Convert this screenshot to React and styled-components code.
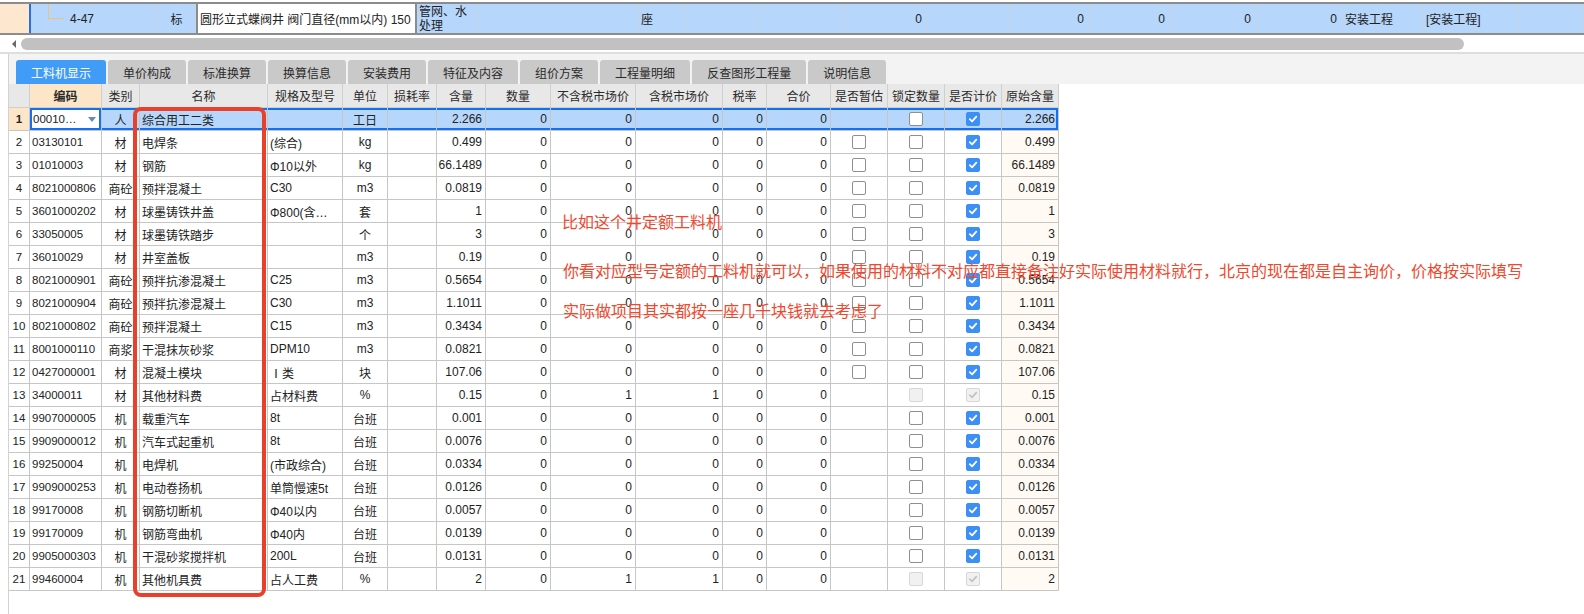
import React from "react";
import styled, { createGlobalStyle, css } from "styled-components";

const Global = createGlobalStyle`
  html, body { margin: 0; padding: 0; background: #fff; }
  body {
    font-family: "Liberation Sans", "Noto Sans CJK SC", sans-serif;
    font-size: 12px;
    color: #222;
  }
`;

const Page = styled.div`
  position: relative;
  width: 1584px;
  height: 614px;
  overflow: hidden;
  background: #fff;
`;

/* ---------- top (parent grid) row ---------- */
const TopArea = styled.div`
  padding-top: 2px;
  background: #fff;
`;

const TopRow = styled.div`
  display: flex;
  height: 33px;
  box-sizing: border-box;
  border-top: 2px solid #8c8c8c;
  border-bottom: 2px solid #8c8c8c;
  background: #b6d6fb;
`;

const TopHead = styled.div`
  width: 29px;
  flex: none;
  background: #fde8cf;
  border-right: 2px solid #2b6fd6;
`;

const TopCell = styled.div`
  width: ${(p) => p.$w}px;
  flex: ${(p) => (p.$grow ? "1" : "none")};
  box-sizing: border-box;
  border-right: 1px solid #c5d3e3;
  display: flex;
  align-items: center;
  justify-content: ${(p) =>
    p.$align === "right" ? "flex-end" : p.$align === "center" ? "center" : "flex-start"};
  padding: ${(p) => (p.$align === "right" ? "0 5px 0 0" : "0 0 0 2px")};
  font-size: 12px;
  white-space: nowrap;
  position: relative;
  ${(p) =>
    p.$white &&
    css`
      background: #fff;
      border-left: 2px solid #8c8c8c;
      border-right: 2px solid #8c8c8c;
    `}
`;

const TwoLine = styled.div`
  white-space: normal;
  line-height: 14px;
  align-self: flex-start;
  padding-top: 1px;
  width: 52px;
`;

const TreeLine = styled.span`
  width: 16px;
  height: 15px;
  margin: -14px 6px 0 15px;
  box-sizing: border-box;
  border-left: 1px solid #efc27c;
  border-bottom: 1px solid #efc27c;
  flex: none;
`;

/* ---------- horizontal scrollbar ---------- */
const ScrollArea = styled.div`
  height: 19px;
  box-sizing: border-box;
  display: flex;
  align-items: center;
  gap: 5px;
  padding-left: 12px;
  border-bottom: 2px solid #dedede;
`;

const ArrowLeft = styled.span`
  width: 0;
  height: 0;
  border-top: 4px solid transparent;
  border-bottom: 4px solid transparent;
  border-right: 4px solid #6a6a6a;
`;

const Thumb = styled.div`
  width: 1443px;
  height: 12px;
  border-radius: 6px;
  background: #c1c1c1;
`;

/* ---------- bottom panel ---------- */
const Panel = styled.div`
  margin-left: 8px;
  border-left: 1px solid #d2d2d2;
  height: 560px;
`;

const TabStrip = styled.div`
  display: flex;
  align-items: flex-end;
  gap: 2px;
  height: 30px;
  box-sizing: border-box;
  padding-left: 7px;
  background: #f3f3f3;
`;

const Tab = styled.div`
  height: 24px;
  padding: 0 15px;
  display: flex;
  align-items: center;
  font-family: "Noto Sans CJK SC", sans-serif;
  font-size: 12px;
  border-radius: 3px 3px 0 0;
  background: ${(p) => (p.$active ? "#409cf7" : "#c9c9c9")};
  color: ${(p) => (p.$active ? "#fff" : "#2a2a2a")};
`;

const COLS = [21, 72, 38, 128, 75, 45, 49, 49, 65, 85, 87, 44, 64, 57, 57, 57, 57];

const GridRow = styled.div`
  display: grid;
  grid-template-columns: ${COLS.map((c) => c + "px").join(" ")};
  height: ${(p) => (p.$head ? 24 : 23)}px;
`;

const Cell = styled.div`
  box-sizing: border-box;
  border-right: 1px solid #c6c6c6;
  border-bottom: 1px solid #c6c6c6;
  display: flex;
  align-items: center;
  justify-content: ${(p) =>
    p.$align === "right" ? "flex-end" : p.$align === "center" ? "center" : "flex-start"};
  padding: ${(p) => (p.$align === "right" ? "0 3px 0 0" : p.$align === "center" ? "0" : "0 0 0 2px")};
  background: ${(p) => p.$bg || "#fff"};
  font-size: ${(p) => (p.$small ? "11.5px" : "12px")};
  font-weight: ${(p) => (p.$bold ? "bold" : "normal")};
  white-space: nowrap;
  overflow: hidden;
  ${(p) =>
    p.$sel &&
    css`
      box-shadow: inset 0 2px 0 #1570ef, inset 0 -2px 0 #1570ef;
    `}
  ${(p) =>
    p.$selLast &&
    css`
      box-shadow: inset 0 2px 0 #1570ef, inset 0 -2px 0 #1570ef, inset -2px 0 0 #1570ef;
    `}
  ${(p) =>
    p.$focus &&
    css`
      box-shadow: inset 0 0 0 2px #1570ef;
      justify-content: space-between;
      padding: 0 5px 0 3px;
    `}
`;

const HeadCell = styled.div`
  box-sizing: border-box;
  border-right: 1px solid #cfcfcf;
  border-bottom: 1px solid #cfcfcf;
  display: flex;
  align-items: center;
  justify-content: center;
  background: ${(p) => (p.$hl ? "#fde6c8" : "#e8e8e8")};
  font-family: "Noto Sans CJK SC", sans-serif;
  font-weight: ${(p) => (p.$hl ? "bold" : "normal")};
  font-size: 12px;
  color: #2a2a2a;
  white-space: nowrap;
`;

const DropTri = styled.span`
  width: 0;
  height: 0;
  border-left: 4px solid transparent;
  border-right: 4px solid transparent;
  border-top: 5px solid #5f8cc4;
`;

const Box = styled.span`
  width: 14px;
  height: 14px;
  box-sizing: border-box;
  border-radius: 2px;
  display: flex;
  align-items: center;
  justify-content: center;
  border: 1px solid
    ${(p) =>
      p.$s === "c" ? "#3c8ff4" : p.$s === "d" || p.$s === "dc" ? "#d7d7d7" : "#8f8f8f"};
  background: ${(p) =>
    p.$s === "c" ? "#3c8ff4" : p.$s === "d" || p.$s === "dc" ? "#f1f1f1" : "#fff"};
`;

const Annot = styled.div`
  position: absolute;
  left: ${(p) => p.$x}px;
  top: ${(p) => p.$y}px;
  font-family: "Noto Sans CJK SC", sans-serif;
  font-size: 16px;
  line-height: 20px;
  color: #f0472d;
  white-space: nowrap;
`;

const RedFrame = styled.div`
  position: absolute;
  left: 133px;
  top: 107px;
  width: 133px;
  height: 490px;
  box-sizing: border-box;
  border: 4px solid #e8402a;
  border-radius: 8px;
`;

function CheckBox({ s }) {
  if (!s) return null;
  return (
    <Box $s={s}>
      {(s === "c" || s === "dc") && (
        <svg width="10" height="10" viewBox="0 0 10 10">
          <path
            d="M1.8 5.2 L4.1 7.4 L8.3 2.6"
            fill="none"
            stroke={s === "c" ? "#fff" : "#c4c4c4"}
            strokeWidth="1.8"
            strokeLinecap="round"
            strokeLinejoin="round"
          />
        </svg>
      )}
    </Box>
  );
}

const HEAD = [
  "",
  "编码",
  "类别",
  "名称",
  "规格及型号",
  "单位",
  "损耗率",
  "含量",
  "数量",
  "不含税市场价",
  "含税市场价",
  "税率",
  "合价",
  "是否暂估",
  "锁定数量",
  "是否计价",
  "原始含量",
];

const ROWS = [
  ["00010…", "人", "综合用工二类", "", "工日", "2.266", "0", "0", "0", null, "u", "c"],
  ["03130101", "材", "电焊条", "(综合)", "kg", "0.499", "0", "0", "0", "u", "u", "c"],
  ["01010003", "材", "钢筋", "Φ10以外", "kg", "66.1489", "0", "0", "0", "u", "u", "c"],
  ["8021000806", "商砼", "预拌混凝土", "C30", "m3", "0.0819", "0", "0", "0", "u", "u", "c"],
  ["3601000202", "材", "球墨铸铁井盖", "Φ800(含…", "套", "1", "0", "0", "0", "u", "u", "c"],
  ["33050005", "材", "球墨铸铁踏步", "", "个", "3", "0", "0", "0", "u", "u", "c"],
  ["36010029", "材", "井室盖板", "", "m3", "0.19", "0", "0", "0", "u", "u", "c"],
  ["8021000901", "商砼", "预拌抗渗混凝土", "C25", "m3", "0.5654", "0", "0", "0", "u", "u", "c"],
  ["8021000904", "商砼", "预拌抗渗混凝土", "C30", "m3", "1.1011", "0", "0", "0", "u", "u", "c"],
  ["8021000802", "商砼", "预拌混凝土", "C15", "m3", "0.3434", "0", "0", "0", "u", "u", "c"],
  ["8001000110", "商浆", "干混抹灰砂浆", "DPM10", "m3", "0.0821", "0", "0", "0", "u", "u", "c"],
  ["0427000001", "材", "混凝土模块", "Ⅰ类", "块", "107.06", "0", "0", "0", "u", "u", "c"],
  ["34000011", "材", "其他材料费", "占材料费", "%", "0.15", "0", "1", "1", null, "d", "dc"],
  ["9907000005", "机", "载重汽车", "8t", "台班", "0.001", "0", "0", "0", null, "u", "c"],
  ["9909000012", "机", "汽车式起重机", "8t", "台班", "0.0076", "0", "0", "0", null, "u", "c"],
  ["99250004", "机", "电焊机", "(市政综合)", "台班", "0.0334", "0", "0", "0", null, "u", "c"],
  ["9909000253", "机", "电动卷扬机", "单筒慢速5t", "台班", "0.0126", "0", "0", "0", null, "u", "c"],
  ["99170008", "机", "钢筋切断机", "Φ40以内", "台班", "0.0057", "0", "0", "0", null, "u", "c"],
  ["99170009", "机", "钢筋弯曲机", "Φ40内", "台班", "0.0139", "0", "0", "0", null, "u", "c"],
  ["9905000303", "机", "干混砂浆搅拌机", "200L", "台班", "0.0131", "0", "0", "0", null, "u", "c"],
  ["99460004", "机", "其他机具费", "占人工费", "%", "2", "0", "1", "1", null, "d", "dc"],
];

const TABS = [
  "工料机显示",
  "单价构成",
  "标准换算",
  "换算信息",
  "安装费用",
  "特征及内容",
  "组价方案",
  "工程量明细",
  "反查图形工程量",
  "说明信息",
];

function DataRow({ r, i }) {
  const sel = i === 0;
  const [code, kind, name, spec, unit, qty, num, p1, p2, est, lock, price] = r;
  const bg = sel ? "#b6d6fb" : "#fff";
  return (
    <GridRow>
      <Cell $align="center" $bg={sel ? "#fde6c8" : "#fff"} $bold={sel} $small>
        {i + 1}
      </Cell>
      {sel ? (
        <Cell $focus $small>
          <span>{code}</span>
          <DropTri />
        </Cell>
      ) : (
        <Cell $small>{code}</Cell>
      )}
      <Cell $align="center" $bg={bg} $sel={sel}>{kind}</Cell>
      <Cell $bg={bg} $sel={sel}>{name}</Cell>
      <Cell $bg={bg} $sel={sel}>{spec}</Cell>
      <Cell $align="center" $bg={bg} $sel={sel}>{unit}</Cell>
      <Cell $bg={bg} $sel={sel} />
      <Cell $align="right" $bg={bg} $sel={sel}>{qty}</Cell>
      <Cell $align="right" $bg={bg} $sel={sel}>{num}</Cell>
      <Cell $align="right" $bg={bg} $sel={sel}>{p1}</Cell>
      <Cell $align="right" $bg={bg} $sel={sel}>{p2}</Cell>
      <Cell $align="right" $bg={bg} $sel={sel}>0</Cell>
      <Cell $align="right" $bg={bg} $sel={sel}>0</Cell>
      <Cell $align="center" $bg={bg} $sel={sel}><CheckBox s={est} /></Cell>
      <Cell $align="center" $bg={bg} $sel={sel}><CheckBox s={lock} /></Cell>
      <Cell $align="center" $bg={bg} $sel={sel}><CheckBox s={price} /></Cell>
      <Cell $align="right" $bg={sel ? bg : "#fffaf4"} $selLast={sel}>{qty}</Cell>
    </GridRow>
  );
}

export default function App() {
  return (
    <Page>
      <Global />
      <TopArea>
        <TopRow>
          <TopHead />
          <TopCell $w={125}>
            <TreeLine />
            4-47
          </TopCell>
          <TopCell $w={40} $align="center">标</TopCell>
          <TopCell $w={221} $white>圆形立式蝶阀井 阀门直径(mm以内) 150</TopCell>
          <TopCell $w={61}>
            <TwoLine>管网、水处理</TwoLine>
          </TopCell>
          <TopCell $w={161} />
          <TopCell $w={46}>座</TopCell>
          <TopCell $w={72} />
          <TopCell $w={86} />
          <TopCell $w={85} $align="right">0</TopCell>
          <TopCell $w={82} />
          <TopCell $w={80} $align="right">0</TopCell>
          <TopCell $w={81} $align="right">0</TopCell>
          <TopCell $w={86} $align="right">0</TopCell>
          <TopCell $w={86} $align="right">0</TopCell>
          <TopCell $w={81}>安装工程</TopCell>
          <TopCell $w={96}>[安装工程]</TopCell>
          <TopCell $grow />
        </TopRow>
      </TopArea>
      <ScrollArea>
        <ArrowLeft />
        <Thumb />
      </ScrollArea>
      <Panel>
        <TabStrip>
          {TABS.map((t, i) => (
            <Tab key={t} $active={i === 0}>{t}</Tab>
          ))}
        </TabStrip>
        <GridRow $head>
          {HEAD.map((h, i) => (
            <HeadCell key={i} $hl={i === 1}>{h}</HeadCell>
          ))}
        </GridRow>
        {ROWS.map((r, i) => (
          <DataRow key={i} r={r} i={i} />
        ))}
      </Panel>
      <RedFrame />
      <Annot $x={562} $y={211}>比如这个井定额工料机</Annot>
      <Annot $x={563} $y={260}>
        你看对应型号定额的工料机就可以，如果使用的材料不对应都直接备注好实际使用材料就行，北京的现在都是自主询价，价格按实际填写
      </Annot>
      <Annot $x={563} $y={300}>实际做项目其实都按一座几千块钱就去考虑了</Annot>
    </Page>
  );
}
